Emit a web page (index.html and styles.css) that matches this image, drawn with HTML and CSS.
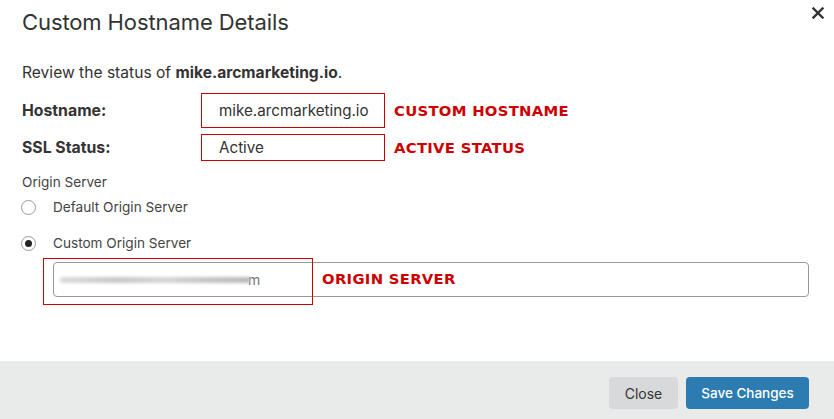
FILE: index.html
```html
<!DOCTYPE html>
<html>
<head>
<meta charset="utf-8">
<link rel="stylesheet" href="styles.css">
</head>
<body>
<div class="modal">
  <div class="header">
    <h1 class="title">Custom Hostname Details</h1>
    <button class="close-x" aria-label="Close">
      <svg width="12" height="12" viewBox="0 0 12 12"><path d="M1.5 1.5 L10.5 10.5 M10.5 1.5 L1.5 10.5" stroke="#333" stroke-width="2.4" stroke-linecap="square"/></svg>
    </button>
  </div>
  <div class="body">
    <p class="intro">Review the status of <b>mike.arcmarketing.io</b>.</p>
    <div class="row row-host">
      <span class="label">Hostname:</span>
      <span class="box box-host">mike.arcmarketing.io</span>
      <span class="note">CUSTOM HOSTNAME</span>
    </div>
    <div class="row row-ssl">
      <span class="label">SSL Status:</span>
      <span class="box box-ssl">Active</span>
      <span class="note">ACTIVE STATUS</span>
    </div>
    <div class="group-label">Origin Server</div>
    <label class="radio-row r1"><span class="radio"></span><span>Default Origin Server</span></label>
    <label class="radio-row r2"><span class="radio checked"></span><span>Custom Origin Server</span></label>
    <div class="origin">
      <div class="input"><span class="redacted"></span><span class="tail">m</span></div>
      <div class="origin-box"></div>
      <span class="note origin-note">ORIGIN SERVER</span>
    </div>
  </div>
  <div class="footer">
    <button class="btn btn-close">Close</button>
    <button class="btn btn-save">Save Changes</button>
  </div>
</div>
</body>
</html>
```
FILE: styles.css
```css
html, body { margin: 0; padding: 0; background: #fff; }
body { font-family: Inter, "Open Sans", sans-serif; color: #333; width: 834px; height: 419px; overflow: hidden; }
.modal { width: 834px; height: 419px; display: flex; flex-direction: column; }
.header { display: flex; justify-content: space-between; align-items: flex-start; padding: 7px 10px 0 22px; height: 54px; box-sizing: border-box; }
.title { margin: 0; font-size: 22px; font-weight: 400; color: #333; line-height: 30px; letter-spacing: -0.1px; }
.close-x { border: 0; background: none; padding: 0; margin: 0; width: 12px; height: 12px; display: block; }
.close-x svg { display: block; }
.body { flex: 1; padding: 0 22px; }
.intro { margin: 7px 0 0; font-size: 15.6px; line-height: 24px; color: #333; }
.intro b { font-weight: 700; }
.row { display: flex; align-items: center; }
.row-host { margin-top: 8px; height: 35px; }
.row-ssl { margin-top: 6px; height: 27px; }
.label { width: 179px; font-size: 15.8px; font-weight: 700; color: #333; flex: none; }
.box { box-sizing: border-box; border: 1px solid #c00; display: flex; align-items: center; padding-left: 17px; font-size: 15.2px; color: #333; flex: none; }
.box-host { width: 184px; height: 35px; }
.box-ssl { width: 184px; height: 27px; }
.note { font-family: "DejaVu Sans", Verdana, sans-serif; font-weight: 700; color: #c00; font-size: 14.8px; letter-spacing: 0.3px; margin-left: 9px; }
.group-label { margin-top: 12px; font-size: 13.6px; color: #444; line-height: 18px; }
.radio-row { display: flex; align-items: center; font-size: 13.6px; color: #444; height: 18px; }
.r1 { margin-top: 7px; }
.r2 { margin-top: 18px; }
.radio { box-sizing: border-box; width: 15px; height: 15px; border-radius: 50%; border: 1px solid #999; background: #fff; margin-left: -1px; margin-right: 17px; flex: none; position: relative; }
.radio.checked::after { content: ""; position: absolute; left: 3px; top: 3px; width: 7px; height: 7px; border-radius: 50%; background: #222; }
.origin { position: relative; margin-top: 6px; margin-left: 31px; height: 40px; }
.input { position: absolute; left: 0; top: 4px; width: 756px; height: 35px; box-sizing: border-box; border: 1px solid #999; border-radius: 4px; display: flex; align-items: center; padding-left: 6px; font-size: 14px; color: #555; }
.redacted { display: inline-block; width: 190px; height: 6px; background: linear-gradient(90deg, #ddd, #c8c8c8 30%, #d6d6d6 55%, #c4c4c4 80%, #bbb); filter: blur(1.5px); }
.tail { margin-left: -2px; color: #777; }
.origin-box { position: absolute; left: -10px; top: 0; width: 270px; height: 47px; box-sizing: border-box; border: 1px solid #c00; pointer-events: none; }
.origin-note { position: absolute; left: 269px; top: 12px; margin: 0; }
.footer { height: 58px; background: #e9eaea; display: flex; justify-content: flex-end; align-items: flex-start; padding: 16px 25px 0 0; box-sizing: border-box; gap: 8px; flex: none; }
.btn { border: 0; border-radius: 4px; height: 32px; font-family: Inter, "Open Sans", sans-serif; font-size: 14px; padding: 0; cursor: pointer; }
.btn-close { width: 69px; background: #d8d9da; color: #333; }
.btn-save { width: 123px; background: #2c7cb1; color: #fff; font-weight: 500; font-size: 13.5px; }
```
